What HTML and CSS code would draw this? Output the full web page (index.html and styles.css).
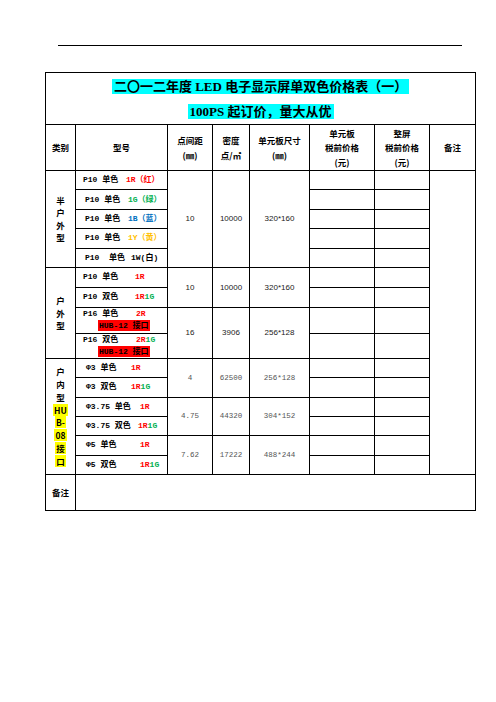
FILE: index.html
```html
<!DOCTYPE html>
<html lang="zh">
<head>
<meta charset="utf-8">
<title>二〇一二年度LED电子显示屏单双色价格表</title>
<link rel="stylesheet" href="styles.css">
</head>
<body>
<div class="page">
  <div class="topline"></div>
  <table class="price">
    <colgroup>
      <col class="c1"><col class="c2"><col class="c3"><col class="c4">
      <col class="c5"><col class="c6"><col class="c7"><col class="c8">
    </colgroup>
    <tr class="h-title">
      <td colspan="8" class="title">
        <div class="tline t1"><span class="hl">二〇一二年度 LED 电子显示屏单双色价格表（一）</span></div>
        <div class="tline t2"><span class="hl">100PS 起订价，量大从优</span></div>
      </td>
    </tr>
    <tr class="h-head">
      <th>类别</th>
      <th>型号</th>
      <th>点间距<br>(㎜)</th>
      <th>密度<br>点/㎡</th>
      <th>单元板尺寸<br>(㎜)</th>
      <th>单元板<br>税前价格<br>(元)</th>
      <th>整屏<br>税前价格<br>(元)</th>
      <th>备注</th>
    </tr>

    <tr class="g1">
      <td rowspan="5" class="cat">半<br>户<br>外<br>型</td>
      <td class="m"><span class="nm w43">P10 单色</span><span class="red">1R（红）</span></td>
      <td rowspan="5" class="num">10</td>
      <td rowspan="5" class="num">10000</td>
      <td rowspan="5" class="num">320*160</td>
      <td></td><td></td>
      <td rowspan="15"></td>
    </tr>
    <tr class="g1">
      <td class="m"><span class="nm w43 ind1">P10 单色</span><span class="green">1G（绿）</span></td>
      <td></td><td></td>
    </tr>
    <tr class="g1">
      <td class="m"><span class="nm w43 ind1">P10 单色</span><span class="blue">1B（蓝）</span></td>
      <td></td><td></td>
    </tr>
    <tr class="g1">
      <td class="m"><span class="nm w43 ind1">P10 单色</span><span class="yellow">1Y（黄）</span></td>
      <td></td><td></td>
    </tr>
    <tr class="g1">
      <td class="m"><span class="nm w46 ind1">P10&nbsp; 单色</span><span>1W(白)</span></td>
      <td></td><td></td>
    </tr>

    <tr class="g2a">
      <td rowspan="4" class="cat">户<br>外<br>型</td>
      <td class="m"><span class="nm w52">P10 单色</span><span class="red">1R</span></td>
      <td rowspan="2" class="num">10</td>
      <td rowspan="2" class="num">10000</td>
      <td rowspan="2" class="num">320*160</td>
      <td></td><td></td>
    </tr>
    <tr class="g2a">
      <td class="m"><span class="nm w52">P10 双色</span><span class="red">1R</span><span class="green">1G</span></td>
      <td></td><td></td>
    </tr>
    <tr class="g2b">
      <td class="m two"><span class="nm w53">P16 单色</span><span class="red">2R</span><br><span class="hub">HUB-12 接口</span></td>
      <td rowspan="2" class="num">16</td>
      <td rowspan="2" class="num">3906</td>
      <td rowspan="2" class="num">256*128</td>
      <td></td><td></td>
    </tr>
    <tr class="g2c">
      <td class="m two"><span class="nm w53">P16 双色</span><span class="red">2R</span><span class="green">1G</span><br><span class="hub">HUB-12 接口</span></td>
      <td></td><td></td>
    </tr>

    <tr class="g3">
      <td rowspan="6" class="cat cat3">户<br>内<br>型<br><span class="yl">HU</span><br><span class="yl">B-</span><br><span class="yl">08</span><br><span class="yl">接</span><br><span class="yl">口</span></td>
      <td class="m m3"><span class="nm w45">Φ3 单色</span><span class="red">1R</span></td>
      <td rowspan="2" class="num g">4</td>
      <td rowspan="2" class="num g">62500</td>
      <td rowspan="2" class="num g">256*128</td>
      <td></td><td></td>
    </tr>
    <tr class="g3">
      <td class="m m3"><span class="nm w45">Φ3 双色</span><span class="red">1R</span><span class="green">1G</span></td>
      <td></td><td></td>
    </tr>
    <tr class="g3">
      <td class="m m3"><span class="nm w54">Φ3.75 单色</span><span class="red">1R</span></td>
      <td rowspan="2" class="num g">4.75</td>
      <td rowspan="2" class="num g">44320</td>
      <td rowspan="2" class="num g">304*152</td>
      <td></td><td></td>
    </tr>
    <tr class="g3">
      <td class="m m3"><span class="nm w52">Φ3.75 双色</span><span class="red">1R</span><span class="green">1G</span></td>
      <td></td><td></td>
    </tr>
    <tr class="g3">
      <td class="m m3"><span class="nm w54">Φ5 单色</span><span class="red">1R</span></td>
      <td rowspan="2" class="num g">7.62</td>
      <td rowspan="2" class="num g">17222</td>
      <td rowspan="2" class="num g">488*244</td>
      <td></td><td></td>
    </tr>
    <tr class="g3">
      <td class="m m3"><span class="nm w54">Φ5 双色</span><span class="red">1R</span><span class="green">1G</span></td>
      <td></td><td></td>
    </tr>

    <tr class="rem">
      <th class="remark">备注</th>
      <td colspan="7"></td>
    </tr>
  </table>
</div>
</body>
</html>
```

FILE: styles.css
```css
html, body {
  margin: 0;
  padding: 0;
  background: #ffffff;
}

body {
  font-family: "Liberation Serif", "Noto Sans CJK SC", serif;
  color: #000000;
}

.page {
  width: 496px;
  padding-top: 45px;
}

.topline {
  margin-left: 58px;
  width: 404px;
  height: 1px;
  background: #000000;
}

.price {
  margin-top: 26px;
  margin-left: 45px;
  border-collapse: collapse;
  table-layout: fixed;
  width: 431px;
}

.c1 { width: 30px; }
.c2 { width: 92px; }
.c3 { width: 45px; }
.c4 { width: 37px; }
.c5 { width: 60px; }
.c6 { width: 65px; }
.c7 { width: 55px; }
.c8 { width: 46px; }

.price td,
.price th {
  border: 1px solid #000000;
  padding: 0;
  vertical-align: middle;
}

.h-title { height: 52px; }
.h-head { height: 46px; }
.g1 { height: 19.4px; }
.g2a { height: 20px; }
.g2b { height: 26px; }
.g2c { height: 25px; }
.g3 { height: 19.33px; }
.rem { height: 36px; }

.price .title {
  text-align: center;
  font-family: "Liberation Serif", "Noto Sans CJK SC", serif;
  font-weight: 700;
  font-size: 13px;
}

.tline {
  line-height: 17px;
}

.t1 { margin: 5px 0 8px; }
.t2 { margin: 0 0 4px; }

.hl {
  background: #00ffff;
  padding: 0 2px;
}

.price th {
  font-family: "Noto Sans CJK SC", sans-serif;
  font-weight: 700;
  font-size: 8.5px;
  line-height: 14.5px;
  text-align: center;
}

.price .cat {
  text-align: center;
  font-family: "Noto Sans CJK SC", sans-serif;
  font-weight: 700;
  font-size: 8.5px;
  line-height: 12.5px;
}

.price .cat3 {
  line-height: 12.9px;
}

.yl {
  background: #ffff00;
  padding: 0 1px;
}

.price .m {
  font-family: "Liberation Mono", "Noto Sans CJK SC", monospace;
  font-weight: 700;
  font-size: 8px;
  line-height: 12px;
  padding-left: 7px;
  white-space: nowrap;
}

.price .m3 {
  padding-left: 10px;
}

.nm {
  display: inline-block;
}

.ind1 { margin-left: 2px; }

.w43 { width: 43px; }
.w45 { width: 45px; }
.w46 { width: 46px; }
.w52 { width: 52px; }
.w53 { width: 53px; }
.w54 { width: 54px; }

.hub {
  display: inline-block;
  margin-left: 15px;
  background: #ff0000;
  color: #000000;
  padding: 0 1px;
  line-height: 11px;
}

.red { color: #ff0000; }
.green { color: #00b050; }
.blue { color: #0070c0; }
.yellow { color: #ffc000; }

.price .num {
  text-align: center;
  font-family: "Liberation Sans", sans-serif;
  font-size: 8px;
  color: #222222;
}

.price .num.g {
  font-family: "Liberation Mono", monospace;
  font-size: 7.5px;
  color: #555555;
}
```
